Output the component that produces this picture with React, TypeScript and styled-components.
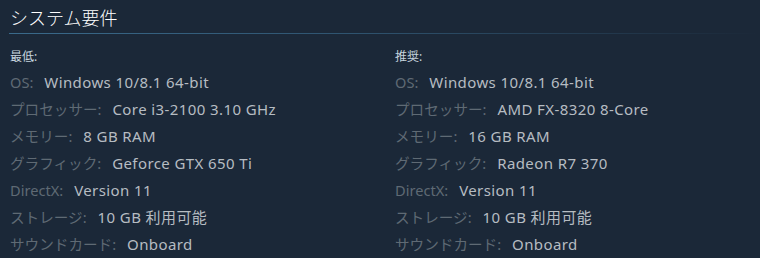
import styled, { createGlobalStyle } from "styled-components";

const GlobalStyle = createGlobalStyle`
    html, body{
        margin: 0;
        padding: 0;
        background-color: #1b2838;
    }
    body{
        font-family: "Noto Sans", "Noto Sans CJK JP", sans-serif;
    }
`;

const Page = styled.div`
    width: 760px;
    height: 258px;
    padding: 6px 0 0 9px;
    box-sizing: border-box;
    overflow: hidden;
`;

const Title = styled.h2`
    margin: 0;
    padding: 0 0 4px 1px;
    font-size: 18px;
    line-height: 24px;
    font-weight: 300;
    color: #ffffff;
    background-image: linear-gradient(to right, #3a6a8b 0%, #2f5470 45%, rgba(47, 84, 112, 0) 100%);
    background-repeat: no-repeat;
    background-position: bottom left;
    background-size: 100% 1px;
`;

const Columns = styled.div`
    display: grid;
    grid-template-columns: 385px 1fr;
    padding: 12px 0 0 1px;
`;

const Column = styled.div`
    display: flex;
    flex-direction: column;
`;

const ColumnHead = styled.div`
    font-size: 12px;
    line-height: 22px;
    color: #c6d4df;
`;

const Row = styled.div`
    display: flex;
    align-items: center;
    column-gap: 11px;
    height: 27px;
    white-space: nowrap;
`;

const Label = styled.span`
    font-size: 14.6px;
    color: #5f6a74;
`;

const Value = styled.span`
    font-size: 15px;
    letter-spacing: 0.4px;
    color: #b6bcc2;
`;

type spec = {label:string,value:string}

const minimum: spec[] = [
    {label: "OS:", value: "Windows 10/8.1 64-bit"},
    {label: "プロセッサー:", value: "Core i3-2100 3.10 GHz"},
    {label: "メモリー:", value: "8 GB RAM"},
    {label: "グラフィック:", value: "Geforce GTX 650 Ti"},
    {label: "DirectX:", value: "Version 11"},
    {label: "ストレージ:", value: "10 GB 利用可能"},
    {label: "サウンドカード:", value: "Onboard"},
];

const recommended: spec[] = [
    {label: "OS:", value: "Windows 10/8.1 64-bit"},
    {label: "プロセッサー:", value: "AMD FX-8320 8-Core"},
    {label: "メモリー:", value: "16 GB RAM"},
    {label: "グラフィック:", value: "Radeon R7 370"},
    {label: "DirectX:", value: "Version 11"},
    {label: "ストレージ:", value: "10 GB 利用可能"},
    {label: "サウンドカード:", value: "Onboard"},
];

function SpecList({title, items}:{title:string, items:spec[]}) {
    return(
        <Column>
            <ColumnHead>{title}</ColumnHead>
            {
                items.map((item)=>{
                    return(
                        <Row key={item.label}>
                            <Label>{item.label}</Label>
                            <Value>{item.value}</Value>
                        </Row>
                    )
                })
            }
        </Column>
    );
}

function App() {
    return(
        <Page>
            <GlobalStyle />
            <Title>システム要件</Title>
            <Columns>
                <SpecList title="最低:" items={minimum} />
                <SpecList title="推奨:" items={recommended} />
            </Columns>
        </Page>
    );
}

export default App;
